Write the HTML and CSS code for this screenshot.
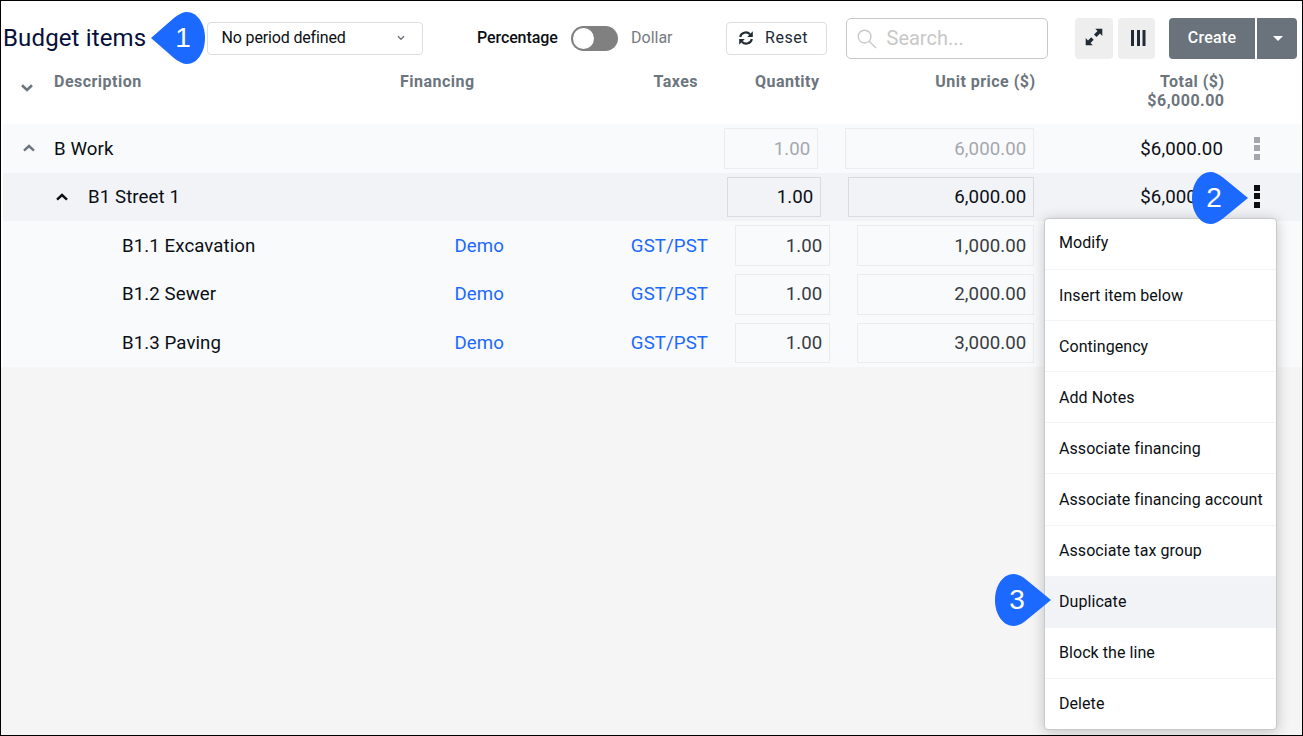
FILE: index.html
```html
<!DOCTYPE html>
<html lang="en">
<head>
<meta charset="utf-8">
<title>Budget items</title>
<link rel="stylesheet" href="styles.css">
</head>
<body>
<div class="page">
  <header class="toolbar">
    <h1 class="title">Budget items</h1>
    <div class="select"><span>No period defined</span>
      <svg width="8" height="6" viewBox="0 0 8 6"><path d="M1 1.3 4 4.2 7 1.3" fill="none" stroke="#6c757d" stroke-width="1.5"/></svg>
    </div>
    <div class="switch-group"><span class="on">Percentage</span><span class="switch"><span class="knob"></span></span><span class="off">Dollar</span></div>
    <button class="reset">
      <svg width="14" height="14" viewBox="0 0 14 14"><path d="M1.2 6A5.6 5.3 0 0 1 11 3.3M12.8 8A5.6 5.3 0 0 1 3 10.7" fill="none" stroke="#212b36" stroke-width="2.1"/><path d="M13.8.3V5.9H8.2ZM.2 13.700V8.100H5.800Z" fill="#212b36"/></svg>
      <span>Reset</span>
    </button>
    <div class="search">
      <svg width="20" height="20" viewBox="0 0 20 20"><g fill="none" stroke="#c8c8c8" stroke-width="1.4"><circle cx="7.6" cy="7.6" r="6.4"/><path d="M12.2 12.2 19 19"/></g></svg>
      <span>Search...</span>
    </div>
    <button class="tool expand"><svg width="18" height="18" viewBox="0 0 18 18"><path d="M10.2.8H17.3V7.9L15 5.6 11.500 9.100 9 6.600 12.500 3.100ZM7.800 17.200H.7V10.100L3 12.400 6.200 9.200 8.700 11.700 5.500 14.900Z" fill="#212b36"/></svg></button>
    <button class="tool"><svg width="16" height="16" viewBox="0 0 16 16"><path d="M1 0h3v16H1zM7 0h3v16H7zM12.500 0h3v16h-3z" fill="#212b36"/></svg></button>
    <button class="create">Create</button>
    <button class="create-more"><svg width="10" height="5" viewBox="0 0 10 5"><path d="M0 0H10L5 5Z" fill="#fff"/></svg></button>
  </header>

  <div class="columns">
    <svg class="toggle-all" width="12" height="8" viewBox="0 0 12 8"><path d="M1 1.200 6 5.900 11 1.200" fill="none" stroke="#6c757d" stroke-width="2.600"/></svg>
    <span class="h-desc">Description</span>
    <span class="h-fin">Financing</span>
    <span class="h-tax">Taxes</span>
    <span class="h-qty">Quantity</span>
    <span class="h-price">Unit price ($)</span>
    <span class="h-total">Total ($)<br>$6,000.00</span>
  </div>

  <main class="rows">
    <div class="row level-0">
      <div class="desc"><svg width="12" height="8" viewBox="0 0 12 8"><path d="M1 6.600 6 2 11 6.600" fill="none" stroke="currentColor" stroke-width="2.400"/></svg><span>B Work</span></div>
      <div class="fin"></div><div class="tax"></div>
      <div class="field qty">1.00</div><div class="field price">6,000.00</div>
      <div class="total">$6,000.00</div><div class="dots"><i></i><i></i><i></i></div>
    </div>
    <div class="row level-1">
      <div class="desc"><svg width="12" height="8" viewBox="0 0 12 8"><path d="M1 6.600 6 2 11 6.600" fill="none" stroke="currentColor" stroke-width="2.400"/></svg><span>B1 Street 1</span></div>
      <div class="fin"></div><div class="tax"></div>
      <div class="field qty">1.00</div><div class="field price">6,000.00</div>
      <div class="total">$6,000.00</div><div class="dots"><i></i><i></i><i></i></div>
    </div>
    <div class="row level-2">
      <div class="desc"><span>B1.1 Excavation</span></div>
      <div class="fin">Demo</div><div class="tax">GST/PST</div>
      <div class="field qty">1.00</div><div class="field price">1,000.00</div>
    </div>
    <div class="row level-2">
      <div class="desc"><span>B1.2 Sewer</span></div>
      <div class="fin">Demo</div><div class="tax">GST/PST</div>
      <div class="field qty">1.00</div><div class="field price">2,000.00</div>
    </div>
    <div class="row level-2">
      <div class="desc"><span>B1.3 Paving</span></div>
      <div class="fin">Demo</div><div class="tax">GST/PST</div>
      <div class="field qty">1.00</div><div class="field price">3,000.00</div>
    </div>
  </main>

  <nav class="menu">
    <a>Modify</a><a>Insert item below</a><a>Contingency</a><a>Add Notes</a><a>Associate financing</a><a>Associate financing account</a><a>Associate tax group</a><a class="active">Duplicate</a><a>Block the line</a><a>Delete</a>
  </nav>

  <div class="pin pin-1"><svg width="54" height="52" viewBox="0 0 54 52"><path d="M0 26 23.500 5.500C28 2 32 0 36 0 46 0 54 11.500 54 26S46 52 36 52C32 52 28 50 23.500 46.500Z" fill="#1c69ff"/></svg><span>1</span></div>
  <div class="pin pin-2"><svg width="56" height="52" viewBox="0 0 56 52"><path d="M56 26 31 5.500C26.500 2 22.500 0 18.500 0 8 0 0 11.500 0 26S8 52 18.500 52C22.500 52 26.500 50 31 46.500Z" fill="#1c69ff"/></svg><span>2</span></div>
  <div class="pin pin-3"><svg width="56" height="52" viewBox="0 0 56 52"><path d="M56 26 31 5.500C26.500 2 22.500 0 18.500 0 8 0 0 11.500 0 26S8 52 18.500 52C22.500 52 26.500 50 31 46.500Z" fill="#1c69ff"/></svg><span>3</span></div>
</div>
</body>
</html>
```
FILE: styles.css
```css
* { box-sizing: border-box; }
body { margin: 0; font-family: Roboto, "Liberation Sans", sans-serif; font-size: 16px; color: #0b0f14; }
svg { display: block; flex: none; }
button { border: 0; padding: 0; font: inherit; display: flex; align-items: center; justify-content: center; flex: none; }

.page { position: relative; width: 1303px; height: 736px; border: 1px solid #000; background: #f5f5f5; overflow: hidden; display: flex; flex-direction: column; }

.toolbar { display: flex; align-items: center; height: 74px; padding-left: 2px; background: #fff; white-space: nowrap; flex: none; }
.title { margin: 0; width: 204px; font-size: 24px; font-weight: 400; letter-spacing: .14px; color: #05103a; }
.select { width: 216px; height: 33px; border: 1px solid #dcdee0; border-radius: 4px; display: flex; align-items: center; justify-content: space-between; padding: 0 17px 2px 13.5px; letter-spacing: -.15px; }
.select svg { margin-top: 1px; }
.switch-group { display: flex; align-items: center; margin-left: 54px; width: 249px; }
.on { width: 94px; font-weight: 500; padding-bottom: 2px; letter-spacing: -.1px; }
.switch { width: 47px; height: 25px; border-radius: 13px; background: #808080; padding: 2px; }
.knob { display: block; width: 21px; height: 21px; border-radius: 50%; background: #fff; }
.off { margin-left: 13px; color: #757b82; padding-bottom: 2px; }
.reset { width: 101px; height: 33px; border: 1px solid #dcdee0; border-radius: 4px; background: #fff; justify-content: flex-start; padding-left: 12px; gap: 12px; color: #212b36; padding-bottom: 1px; letter-spacing: .55px; }
.search { width: 202px; height: 41px; margin-left: 19px; border: 1px solid #c8c8c8; border-radius: 5px; display: flex; align-items: center; gap: 10px; padding-left: 9.5px; font-size: 20px; color: #c8c8c8; }
.search svg { margin-top: 2px; }
.tool { width: 37px; height: 41px; border-radius: 4px; background: #eee; margin-right: 14px; padding-left: 2px; }
.tool.expand { width: 38px; margin-left: 27px; margin-right: 5px; padding-left: 0; padding-bottom: 2px; }
.create { width: 86px; height: 41px; border-radius: 4px 0 0 4px; background: #6a737b; color: #fff; font-weight: 500; padding-bottom: 2px; letter-spacing: .25px; }
.create-more { width: 40px; height: 41px; margin-left: 2px; border-radius: 0 4px 4px 0; background: #6a737b; padding-left: 2px; }

.columns { display: flex; align-items: flex-start; height: 49px; background: #fff; font-weight: 700; line-height: 19px; color: #6c757d; white-space: nowrap; padding-left: 20px; flex: none; letter-spacing: .48px; }
.toggle-all { margin: 9px 21px 0 0; }
.h-desc { width: 346px; }
.h-fin { width: 150px; }
.h-tax { width: 148px; text-align: right; }
.h-qty { width: 121.5px; text-align: right; }
.h-price { width: 216px; text-align: right; }
.h-total { width: 189px; text-align: right; }
.columns span { margin-top: -3px; }

.rows { padding: 0 1px 0 2px; background: #fff; flex: none; font-size: 18.67px; letter-spacing: .08px; }
.row { display: flex; align-items: center; height: 48.667px; background: #f9fafc; }
.desc { width: 397px; display: flex; align-items: center; }
.fin, .tax { width: 104px; text-align: right; color: #1c69ff; }
.tax { width: 204px; }
.field { height: 40.667px; border: 1px solid #ebecee; display: flex; align-items: center; justify-content: flex-end; padding-right: 6.600px; color: #373c42; }
.qty { width: 94px; }
.total { width: 189px; text-align: right; }
.dots { margin-left: 31px; display: grid; gap: 2.500px; }
.dots i { display: block; width: 6px; height: 6px; background: #a3a7ac; }
.level-0 .desc { padding-left: 20px; gap: 19px; }
.level-0 .desc span, .level-0 .total, .level-0 .field { padding-top: 1px; }
.level-0 .desc svg { color: #6c757d; }
.level-0 .field { color: #a4a8ad; }
.level-0 .qty { margin: 0 27px 0 16px; }
.level-0 .price { width: 189px; }
.level-1 { background: #f2f3f7; }
.level-1 .desc { padding-left: 53px; gap: 20px; }
.level-1 .field { border-color: #d9dbe0; color: #0b0f14; padding-top: 1px; }
.level-1 .qty { margin: 0 27px 0 19px; }
.level-1 .price { width: 186px; }
.level-1 .dots { margin-top: -1px; }
.level-1 .dots i { background: #0b0f14; }
.level-2 .desc { padding-left: 119px; }
.level-2 .qty { width: 95px; margin: 0 27px; }
.level-2 .price { width: 177px; }

.menu { position: absolute; left: 1043px; top: 217px; width: 233px; height: 512px; border: 1px solid #c8c9cc; border-radius: 4px; background: #fff; box-shadow: 0 2px 14px rgba(0,0,0,.22); overflow: hidden; display: flex; flex-direction: column; letter-spacing: .06px; }
.menu a { flex: 1; display: flex; align-items: center; padding-left: 14px; border-bottom: 1px solid #f3f4f6; white-space: nowrap; }
.menu a:first-child { align-items: flex-start; line-height: 48px; }
.menu a:last-child { border-bottom: 0; }
.menu .active { background: #f2f3f7; }

.pin { position: absolute; width: 56px; height: 52px; display: grid; color: #fff; font: 28px/52px "Liberation Sans", sans-serif; }
.pin svg, .pin span { grid-area: 1 / 1; }
.pin span { width: 44px; text-align: center; }
.pin-1 { left: 150px; top: 11px; }
.pin-1 span { margin-left: 10px; }
.pin-2 { left: 1191px; top: 171px; }
.pin-3 { left: 994px; top: 573px; }
```
